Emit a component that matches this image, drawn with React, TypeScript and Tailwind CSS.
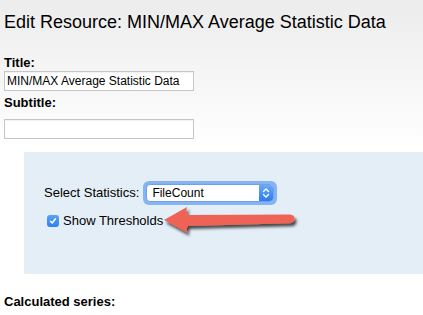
import React from 'react'

const font = { fontFamily: '"Liberation Sans", Arial, sans-serif' }

const TextBox: React.FC<{ value?: string }> = ({ value }) => (
  <div className="h-[20px] w-[190px] border border-[#c6c6c6] bg-white px-[2px] text-[12px] leading-[18px] text-black shadow-[inset_0_1px_1px_rgba(0,0,0,0.06)]">
    {value}
  </div>
)

const SelectBox: React.FC<{ value: string }> = ({ value }) => (
  <div className="rounded-[6px] p-[3px] bg-[#86b4f2]">
    <div className="flex h-[18px] w-[128px] items-stretch overflow-hidden rounded-[4px] border border-[#6fa2ea] bg-white">
      <span className="flex-1 pl-[5px] text-[12px] leading-[16px] text-black">{value}</span>
      <span className="flex w-[14px] items-center justify-center bg-[linear-gradient(to_bottom,#6aaaf9,#2b7cf0)]">
        <svg width="8" height="12" viewBox="0 0 8 12" fill="none" stroke="#fff" strokeWidth="1.4" strokeLinecap="round" strokeLinejoin="round">
          <path d="M1.5 4.5 L4 2 L6.5 4.5" />
          <path d="M1.5 7.5 L4 10 L6.5 7.5" />
        </svg>
      </span>
    </div>
  </div>
)

const Arrow: React.FC = () => (
  <svg
    className="absolute left-[160px] top-[200px]"
    width="145"
    height="45"
    viewBox="0 0 145 45"
  >
    <defs>
      <filter id="arrowShadow" x="-10%" y="-30%" width="130%" height="180%">
        <feDropShadow dx="2" dy="3" stdDeviation="1.4" floodColor="#000" floodOpacity="0.7" />
      </filter>
    </defs>
    <path
      d="M4 20 L27 7 Q25.5 11.5 28 15 L130 14.5 Q134.5 14.8 134.5 18.8 Q134.5 22.8 130 23.2 L28 26 Q25.5 29.5 28 33 Z"
      fill="#ee6455"
      filter="url(#arrowShadow)"
    />
  </svg>
)

export default function App() {
  return (
    <div
      className="relative min-h-screen bg-[linear-gradient(to_bottom,#ececec,#ffffff_150px)] text-black"
      style={font}
    >
      {/* heading */}
      <h1 className="pl-[4px] pt-[11px] text-[18px] font-normal leading-[22px]">
        Edit Resource: MIN/MAX Average Statistic Data
      </h1>

      <div className="pl-[4px]">
        <div className="mt-[22px] text-[13px] font-bold leading-[16px]">Title:</div>
        <TextBox value="MIN/MAX Average Statistic Data" />

        <div className="mt-[4px] text-[13px] font-bold leading-[16px]">Subtitle:</div>
        <div className="mt-[8px]">
          <TextBox />
        </div>
      </div>

      {/* statistics panel */}
      <div className="ml-[24px] mt-[13px] h-[122px] bg-[#e4eef6] pl-[20px] pt-[29px]">
        <div className="flex items-center gap-[4px]">
          <span className="text-[13px] leading-[16px]">Select Statistics:</span>
          <SelectBox value="FileCount" />
        </div>
        <label className="mt-[8px] flex items-center gap-[4px] pl-[3px]">
          <span className="flex h-[12px] w-[12px] items-center justify-center rounded-[3px] bg-[linear-gradient(to_bottom,#5aa2f8,#2f80ef)]">
            <svg width="8" height="8" viewBox="0 0 8 8" fill="none" stroke="#fff" strokeWidth="1.5" strokeLinecap="round" strokeLinejoin="round">
              <path d="M1.5 4.3 L3.2 6 L6.5 1.8" />
            </svg>
          </span>
          <span className="text-[13px] leading-[16px]">Show Thresholds</span>
        </label>
      </div>

      <div className="mt-[20px] pl-[4px] text-[13px] font-bold leading-[16px]">Calculated series:</div>

      <Arrow />
    </div>
  )
}
